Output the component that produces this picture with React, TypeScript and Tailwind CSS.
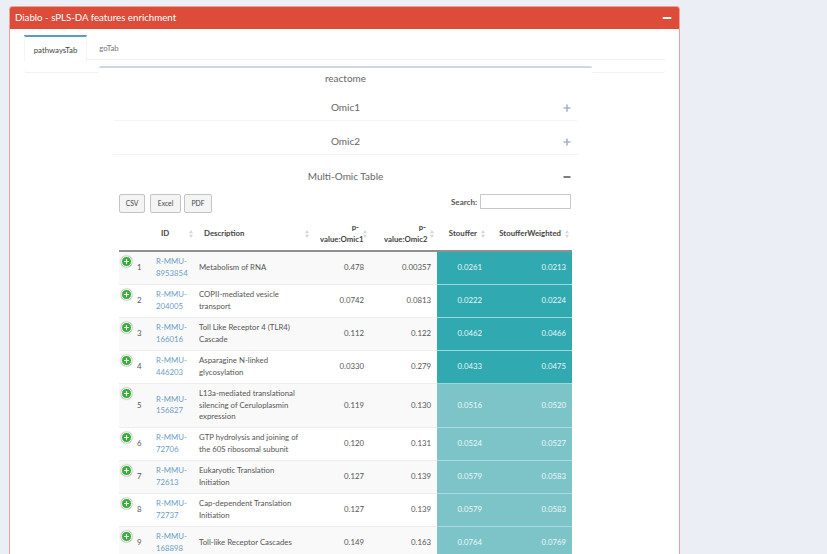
import { Minus, Plus } from "lucide-react";

interface Row {
  n: number;
  id: string;
  desc: string;
  p1: string;
  p2: string;
  s: string;
  sw: string;
  dark: boolean;
}

const rows: Row[] = [
  { n: 1, id: "R-MMU-8953854", desc: "Metabolism of RNA", p1: "0.478", p2: "0.00357", s: "0.0261", sw: "0.0213", dark: true },
  { n: 2, id: "R-MMU-204005", desc: "COPII-mediated vesicle transport", p1: "0.0742", p2: "0.0813", s: "0.0222", sw: "0.0224", dark: true },
  { n: 3, id: "R-MMU-166016", desc: "Toll Like Receptor 4 (TLR4) Cascade", p1: "0.112", p2: "0.122", s: "0.0462", sw: "0.0466", dark: true },
  { n: 4, id: "R-MMU-446203", desc: "Asparagine N-linked glycosylation", p1: "0.0330", p2: "0.279", s: "0.0433", sw: "0.0475", dark: true },
  { n: 5, id: "R-MMU-156827", desc: "L13a-mediated translational silencing of Ceruloplasmin expression", p1: "0.119", p2: "0.130", s: "0.0516", sw: "0.0520", dark: false },
  { n: 6, id: "R-MMU-72706", desc: "GTP hydrolysis and joining of the 60S ribosomal subunit", p1: "0.120", p2: "0.131", s: "0.0524", sw: "0.0527", dark: false },
  { n: 7, id: "R-MMU-72613", desc: "Eukaryotic Translation Initiation", p1: "0.127", p2: "0.139", s: "0.0579", sw: "0.0583", dark: false },
  { n: 8, id: "R-MMU-72737", desc: "Cap-dependent Translation Initiation", p1: "0.127", p2: "0.139", s: "0.0579", sw: "0.0583", dark: false },
  { n: 9, id: "R-MMU-168898", desc: "Toll-like Receptor Cascades", p1: "0.149", p2: "0.163", s: "0.0764", sw: "0.0769", dark: false },
];

// DataTables style double arrow, very faint
function SortArrows() {
  return (
    <svg viewBox="0 0 5 10" className="absolute right-[3px] top-1/2 h-[8px] w-[4px] -translate-y-1/2 fill-[#d8d8d8]">
      <path d="M2.5 0 5 4H0z" />
      <path d="M2.5 10 0 6h5z" />
    </svg>
  );
}

function ExpandIcon() {
  return (
    <span className="absolute left-[2px] top-[4px] flex h-[11px] w-[11px] items-center justify-center rounded-full border border-white bg-[#31b131] shadow-[0_0_2px_#777]">
      <Plus className="h-[7px] w-[7px] text-white" strokeWidth={4} />
    </span>
  );
}

function Accordion({ title, open }: { title: string; open?: boolean }) {
  return (
    <div className={open ? "relative mt-[12px] flex h-[23px] items-center justify-center" : "relative mb-[11px] flex h-[23px] items-center justify-center rounded-[2px] shadow-[0_1px_1px_rgba(0,0,0,0.05)]"}>
      <span className="pb-[2px] text-[10px] text-[#666]">{title}</span>
      {open ? (
        <Minus className="absolute right-[6px] top-[6px] h-[10px] w-[10px] text-[#555]" strokeWidth={4} />
      ) : (
        <Plus className="absolute right-[6px] top-[6px] h-[10px] w-[10px] text-[#aab4c8]" strokeWidth={4} />
      )}
    </div>
  );
}

export default function App() {
  const th = "relative h-[34px] border-b-2 border-[#8f8f8f] font-bold";
  return (
    <div className="h-screen overflow-hidden bg-[#ebeef4] pl-[9px] pt-[6px] font-['Lato',sans-serif] text-[#333]">
      <div className="w-[671px] rounded-[3px] border border-[#eba398] bg-white pb-[40px]">
        <div className="flex h-[22px] items-center justify-between rounded-t-[2px] bg-[#dd4b39] pl-[5px] pr-[6px] text-white">
          <span className="pb-[2px] text-[9.7px]">Diablo - sPLS-DA features enrichment</span>
          <Minus className="h-[12px] w-[12px]" strokeWidth={4} />
        </div>

        <div className="px-[14px] pt-[6px]">
          <div className="h-[37px] rounded-[2px] shadow-[0_1px_1px_rgba(0,0,0,0.06)]">
            <div className="flex h-[25px] border-b border-[#f4f4f4] text-[7.8px]">
              <div className="flex h-[26px] w-[63px] items-center justify-center border-x border-t-2 border-x-[#f4f4f4] border-t-[#5b9bc4] bg-white pt-[3px] text-[#444]">pathwaysTab</div>
              <div className="flex w-[44px] items-center justify-center pt-[4px] text-[#777]">goTab</div>
            </div>
          </div>

          <div className="relative -mt-[6px] ml-[75px] w-[493px] rounded-t-[2px] border-t-2 border-[#d2d6de] bg-white px-[14px] shadow-[0_1px_1px_rgba(0,0,0,0.06)]">
            <div className="flex h-[21px] items-center justify-center text-[10px] text-[#666]">reactome</div>
            <div className="mt-[8px]">
              <Accordion title="Omic1" />
              <Accordion title="Omic2" />
              <Accordion title="Multi-Omic Table" open />
            </div>

            <div className="mx-[6px] mt-[5px] flex items-start justify-between">
              <div className="flex gap-[3px] text-[6.8px] text-[#444]">
                <button className="h-[19px] w-[26px] rounded-[2px] border border-[#c4c4c4] bg-[#f4f4f4]">CSV</button>
                <button className="ml-[2px] h-[19px] w-[31px] rounded-[2px] border border-[#c4c4c4] bg-[#f4f4f4]">Excel</button>
                <button className="h-[19px] w-[28px] rounded-[2px] border border-[#c4c4c4] bg-[#f4f4f4]">PDF</button>
              </div>
              <label className="mr-[1px] flex items-center gap-[3px] text-[8px] font-bold text-[#555]">
                Search:
                <input className="h-[15px] w-[91px] border border-[#c8c8c8] bg-white" />
              </label>
            </div>

            <table className="mx-[6px] mt-[5px] w-[453px] table-fixed border-separate border-spacing-0 text-[7.8px] leading-[11.6px]">
              <colgroup>
                <col className="w-[34px]" />
                <col className="w-[43px]" />
                <col className="w-[116px]" />
                <col className="w-[58px]" />
                <col className="w-[67px]" />
                <col className="w-[51px]" />
                <col className="w-[84px]" />
              </colgroup>
              <thead>
                <tr className="text-[#444]">
                  <th className={th} />
                  <th className={`${th} pl-[8px] text-left`}>ID<SortArrows /></th>
                  <th className={`${th} pl-[8px] text-left`}>Description<SortArrows /></th>
                  <th className={`${th} pl-[8px] pr-[11px] text-right`}>p-value:Omic1<SortArrows /></th>
                  <th className={`${th} pl-[14px] pr-[11px] text-right`}>p-value:Omic2<SortArrows /></th>
                  <th className={`${th} pr-[11px] text-right`}>Stouffer<SortArrows /></th>
                  <th className={`${th} pr-[11px] text-right`}>StoufferWeighted<SortArrows /></th>
                </tr>
              </thead>
              <tbody>
                {rows.map((r) => {
                  const cell = "border-b border-[#ededed]";
                  const teal = r.dark
                    ? "border-b border-[#9fd8dc] bg-[#31a9b1] pr-[6px] text-right text-[#e8f6f7]"
                    : "border-b border-[#aedadc] bg-[#7cc4c8] pr-[6px] text-right text-[#eef8f8]";
                  return (
                    <tr key={r.n} className={r.n % 2 === 1 ? "bg-[#f9f9f9] text-[#555]" : "bg-white text-[#555]"}>
                      <td className={`${cell} relative h-[33px] pl-[18px]`}>
                        <ExpandIcon />
                        {r.n}
                      </td>
                      <td className={`${cell} break-words pl-[3px] text-[#6c9dc4]`}>{r.id}</td>
                      <td className={`${cell} py-[4px] pl-[3px] pr-[8px]`}>{r.desc}</td>
                      <td className={`${cell} pr-[6px] text-right`}>{r.p1}</td>
                      <td className={`${cell} pr-[6px] text-right`}>{r.p2}</td>
                      <td className={teal}>{r.s}</td>
                      <td className={teal}>{r.sw}</td>
                    </tr>
                  );
                })}
              </tbody>
            </table>
          </div>
        </div>
      </div>
    </div>
  );
}
